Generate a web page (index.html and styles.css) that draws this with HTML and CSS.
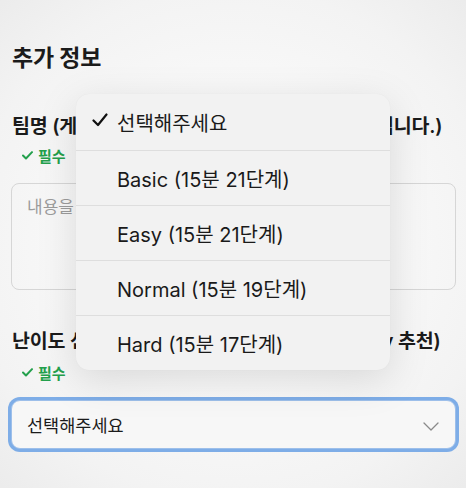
FILE: index.html
```html
<!DOCTYPE html>
<html lang="ko">
<head>
<meta charset="utf-8">
<link rel="stylesheet" href="styles.css">
</head>
<body>
<div class="page">
  <h2 class="title">추가 정보</h2>

  <div class="field">
    <div class="label">팀명 (게임 진행 시 화면에 표시되는 팀 이름이 됩니다.)</div>
    <div class="required">
      <svg class="req-check" viewBox="0 0 12 10" width="11" height="9"><polyline points="1,5 4.3,8.3 11,1.3" fill="none" stroke="#23a04c" stroke-width="2.2" stroke-linecap="round" stroke-linejoin="round"/></svg>
      <span>필수</span>
    </div>
    <div class="textarea">내용을 입력해주세요</div>
  </div>

  <div class="field second">
    <div class="label">난이도 선택 (게임이 처음인 팀의 경우에는 Easy 추천)</div>
    <div class="required tight">
      <svg class="req-check" viewBox="0 0 12 10" width="11" height="9"><polyline points="1,5 4.3,8.3 11,1.3" fill="none" stroke="#23a04c" stroke-width="2.2" stroke-linecap="round" stroke-linejoin="round"/></svg>
      <span>필수</span>
    </div>
    <div class="select">
      <span>선택해주세요</span>
      <svg class="chev" viewBox="0 0 16 9" width="16" height="9"><polyline points="1,1 8,8 15,1" fill="none" stroke="#8a8a8a" stroke-width="1.3" stroke-linecap="round" stroke-linejoin="round"/></svg>
    </div>
  </div>
</div>

<div class="menu">
  <div class="item selected">
    <svg class="mark" viewBox="0 0 16 14" width="16" height="14"><polyline points="1.5,7.5 6,12 14.5,1.5" fill="none" stroke="#111" stroke-width="2.2" stroke-linecap="round" stroke-linejoin="round"/></svg>
    <span>선택해주세요</span>
  </div>
  <div class="item"><span>Basic (15분 21단계)</span></div>
  <div class="item"><span>Easy (15분 21단계)</span></div>
  <div class="item"><span>Normal (15분 19단계)</span></div>
  <div class="item"><span>Hard (15분 17단계)</span></div>
</div>
</body>
</html>
```

FILE: styles.css
```css
html, body {
  margin: 0;
  padding: 0;
}
body {
  width: 466px;
  height: 488px;
  overflow: hidden;
  position: relative;
  font-family: Inter, "Noto Sans CJK KR", sans-serif;
  color: #1b1b1b;
  background: radial-gradient(ellipse 75% 70% at 50% 50%, #fbfbfb 30%, #f3f3f3 75%, #ebebeb 100%);
}
.page {
  padding: 43px 10px 0 11px;
}
.title {
  margin: 0;
  padding-left: 1px;
  font-size: 23px;
  line-height: 30px;
  font-weight: 700;
  letter-spacing: -0.2px;
}
.field {
  margin-top: 40px;
}
.field.second {
  margin-top: 38px;
}
.label {
  padding-left: 1px;
  font-size: 19.5px;
  line-height: 26px;
  font-weight: 600;
  white-space: nowrap;
  letter-spacing: -0.2px;
}
.required {
  display: flex;
  align-items: center;
  gap: 5px;
  margin-top: 6px;
  padding-left: 11px;
  height: 20px;
  color: #23a04c;
  font-size: 15px;
  font-weight: 700;
}
.required.tight {
  margin-top: 8px;
}
.textarea {
  margin-top: 18px;
  height: 107px;
  box-sizing: border-box;
  border: 1px solid #d6d6d6;
  border-radius: 8px;
  padding: 15px 15px 0;
  font-size: 17px;
  line-height: 1;
  color: #9c9c9c;
}
.select {
  margin-top: 18px;
  height: 49px;
  box-sizing: border-box;
  border-radius: 9px;
  border: 1px solid #9dbfea;
  box-shadow: 0 0 0 3px #7eade7;
  background: #f7f7f7;
  display: flex;
  align-items: center;
  justify-content: space-between;
  padding: 0 16px 0 15px;
  font-size: 17.5px;
  color: #1b1b1b;
}
.chev {
  margin-top: 3px;
}
.menu {
  position: absolute;
  left: 76px;
  top: 94px;
  width: 314px;
  background: #f2f2f2;
  border-radius: 13px;
  box-shadow: 0 10px 40px rgba(0, 0, 0, 0.13), 0 0 1px rgba(0, 0, 0, 0.06);
  overflow: hidden;
}
.item {
  height: 55px;
  box-sizing: border-box;
  display: flex;
  align-items: center;
  padding-left: 41px;
  font-size: 20px;
  color: #1a1a1a;
  border-top: 1px solid #dedede;
  position: relative;
}
.item:first-child {
  border-top: none;
  height: 56px;
}
.item .mark {
  position: absolute;
  left: 16px;
  top: 19px;
}
```
